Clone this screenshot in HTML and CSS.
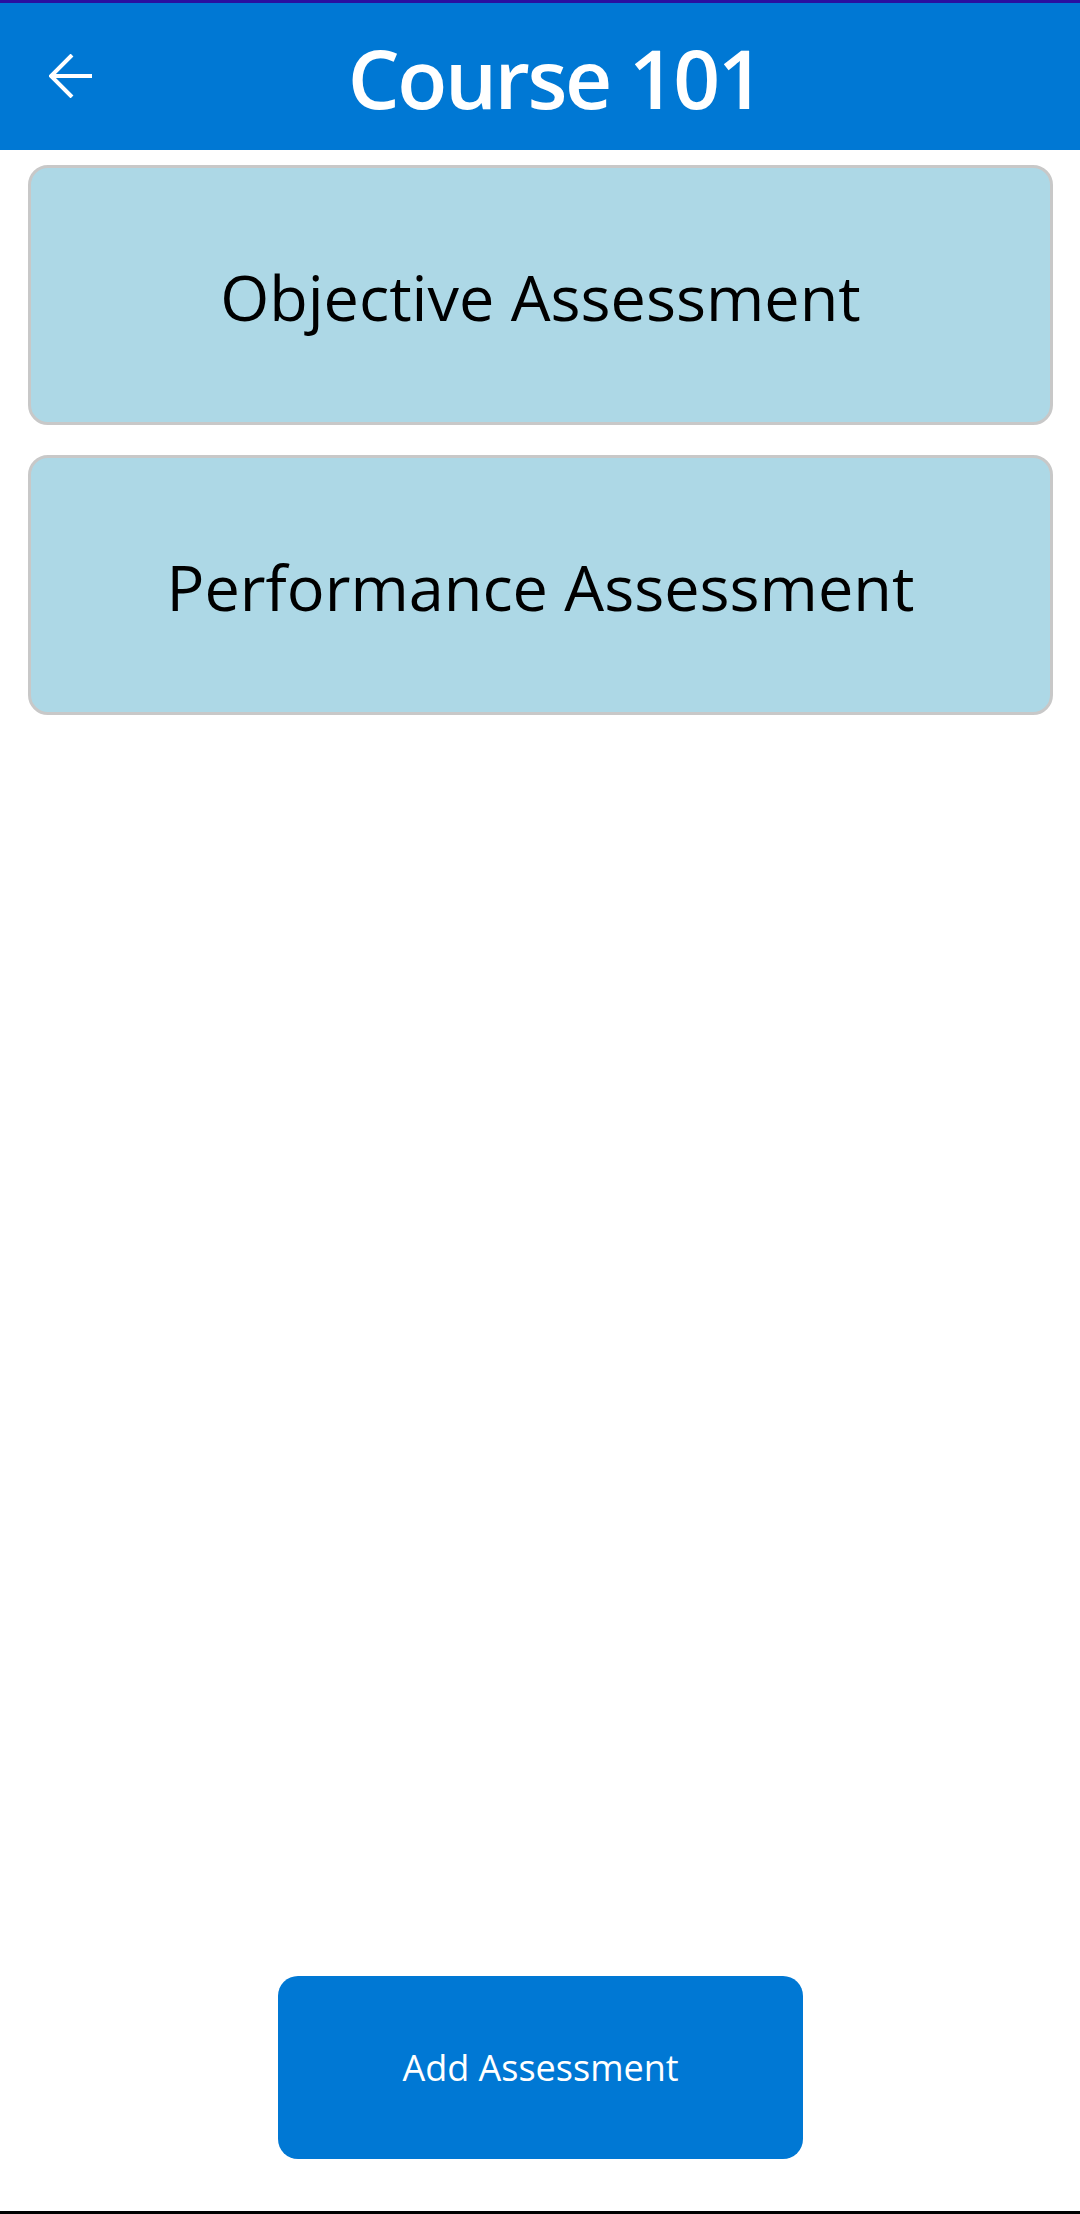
FILE: index.html
```html
<!DOCTYPE html>
<html>
<head>
<meta charset="utf-8">
<link rel="stylesheet" href="styles.css">
</head>
<body>
<div class="screen">
  <header class="topbar">
    <button class="back" aria-label="Back">
      <svg width="44" height="44" viewBox="0 0 44 44"><path d="M43 22H3M23 1L2 22L23 43" fill="none" stroke="#fff" stroke-width="4"/></svg>
    </button>
    <h1 class="title">Course 101</h1>
  </header>
  <main class="list">
    <div class="card">Objective Assessment</div>
    <div class="card">Performance Assessment</div>
  </main>
  <footer class="actions">
    <button class="add">Add Assessment</button>
  </footer>
</div>
</body>
</html>
```
FILE: styles.css
```css
html, body { margin: 0; padding: 0; background: #fff; }
body { font-family: "Open Sans", "Noto Sans", sans-serif; }
.screen {
  width: 1080px; height: 2214px; box-sizing: border-box;
  display: flex; flex-direction: column;
  border-top: 3px solid #2a10a0;
  border-bottom: 3px solid #000;
}
.topbar {
  height: 147px; background: #0078d4; position: relative;
  display: flex; align-items: center; justify-content: center;
}
.back {
  position: absolute; left: 49px; top: 51px;
  width: 44px; height: 44px; padding: 0; border: 0; background: none;
  display: flex;
}
.title {
  margin: 0; color: #fff; font-weight: 600; font-size: 82px;
  line-height: 1; padding-left: 30px; letter-spacing: -2.4px;
}
.list {
  flex: 1; display: flex; flex-direction: column; gap: 30px;
  padding: 15px 27px 0 28px;
}
.card {
  height: 260px; box-sizing: border-box;
  background: #add8e6; border: 3px solid #c8c8c8; border-radius: 20px;
  display: flex; align-items: center; justify-content: center;
  font-size: 63px; color: #000; padding-top: 2px;
}
.actions {
  display: flex; justify-content: center; padding-bottom: 52px;
}
.add {
  width: 525px; height: 183px; border: 0; border-radius: 20px;
  background: #0078d4; color: #fff; font-family: "Open Sans", sans-serif;
  font-size: 36px; font-weight: 400; margin-left: 1px; padding: 0;
}
```
